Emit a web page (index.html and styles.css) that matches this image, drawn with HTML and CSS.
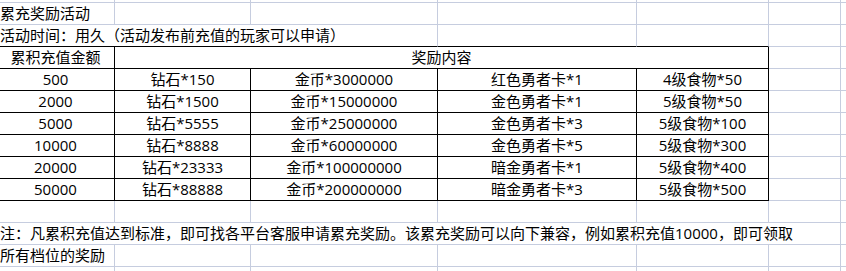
FILE: index.html
```html
<!DOCTYPE html>
<html lang="zh-CN">
<head>
<meta charset="utf-8">
<title>累充奖励活动</title>
<link rel="stylesheet" href="styles.css">
</head>
<body>
<div class="sheet">
  <!-- partial row -->
  <div class="c"></div><div class="c"></div><div class="c"></div><div class="c"></div><div class="c"></div><div class="c"></div><div class="c"></div>

  <div class="c t">累充奖励活动</div><div class="c"></div><div class="c"></div><div class="c"></div><div class="c"></div><div class="c"></div><div class="c"></div>

  <div class="c t s3 bb">活动时间：用久（活动发布前充值的玩家可以申请）</div><div class="c bb"></div><div class="c bb"></div><div class="c"></div><div class="c"></div>

  <div class="c m b">累积充值金额</div><div class="c m b s4">奖励内容</div><div class="c"></div><div class="c"></div>

  <div class="c m b">500</div><div class="c m b">钻石*150</div><div class="c m b">金币*3000000</div><div class="c m b">红色勇者卡*1</div><div class="c m b">4级食物*50</div><div class="c"></div><div class="c"></div>
  <div class="c m b">2000</div><div class="c m b">钻石*1500</div><div class="c m b">金币*15000000</div><div class="c m b">金色勇者卡*1</div><div class="c m b">5级食物*50</div><div class="c"></div><div class="c"></div>
  <div class="c m b">5000</div><div class="c m b">钻石*5555</div><div class="c m b">金币*25000000</div><div class="c m b">金色勇者卡*3</div><div class="c m b">5级食物*100</div><div class="c"></div><div class="c"></div>
  <div class="c m b">10000</div><div class="c m b">钻石*8888</div><div class="c m b">金币*60000000</div><div class="c m b">金色勇者卡*5</div><div class="c m b">5级食物*300</div><div class="c"></div><div class="c"></div>
  <div class="c m b">20000</div><div class="c m b">钻石*23333</div><div class="c m b">金币*100000000</div><div class="c m b">暗金勇者卡*1</div><div class="c m b">5级食物*400</div><div class="c"></div><div class="c"></div>
  <div class="c m b">50000</div><div class="c m b">钻石*88888</div><div class="c m b">金币*200000000</div><div class="c m b">暗金勇者卡*3</div><div class="c m b">5级食物*500</div><div class="c"></div><div class="c"></div>

  <div class="c"></div><div class="c"></div><div class="c"></div><div class="c"></div><div class="c"></div><div class="c"></div><div class="c"></div>

  <div class="c t s6">注：凡累积充值达到标准，即可找各平台客服申请累充奖励。该累充奖励可以向下兼容，例如累积充值10000，即可领取</div><div class="c"></div>

  <div class="c t">所有档位的奖励</div><div class="c"></div><div class="c"></div><div class="c"></div><div class="c"></div><div class="c"></div><div class="c"></div>

  <div class="c"></div><div class="c"></div><div class="c"></div><div class="c"></div><div class="c"></div><div class="c"></div><div class="c"></div>
</div>
</body>
</html>
```
FILE: styles.css
```css
html, body {
  margin: 0;
  padding: 0;
  background: #ffffff;
  overflow: hidden;
}

.sheet {
  display: grid;
  grid-template-columns: 118px 136px 187px 199px 132px 72px 120px;
  grid-auto-rows: 22px;
  margin: -19px 0 0 -3px;
  font-family: "Open Sans", "Noto Sans CJK SC", sans-serif;
  font-size: 15px;
  color: #000000;
}

.c {
  box-sizing: border-box;
  border-right: 1px solid #c6cddf;
  border-bottom: 1px solid #c6cddf;
  line-height: 21px;
  white-space: nowrap;
  overflow: visible;
}

.t {
  padding-left: 3px;
  text-align: left;
}

.m {
  text-align: center;
}

.b {
  border-right-color: #000000;
  border-bottom-color: #000000;
}

.bb {
  border-bottom-color: #000000;
}

.s3 { grid-column: span 3; }
.s4 { grid-column: span 4; }
.s6 { grid-column: span 6; }
```
